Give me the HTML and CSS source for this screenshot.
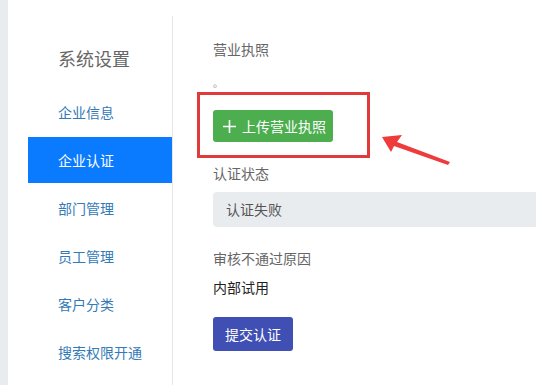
FILE: index.html
```html
<!DOCTYPE html>
<html lang="zh-CN">
<head>
    <meta charset="UTF-8">
    <meta name="viewport" content="width=device-width, initial-scale=1.0">
    <title>系统设置 - 企业认证</title>
    <link rel="stylesheet" href="styles.css">
</head>
<body>
    <div class="page">
        <div class="edge"></div>

        <!-- 左侧菜单 -->
        <div class="sidebar">
            <h2 class="side-title">系统设置</h2>
            <ul class="menu">
                <li class="menu-item">企业信息</li>
                <li class="menu-item active">企业认证</li>
                <li class="menu-item">部门管理</li>
                <li class="menu-item">员工管理</li>
                <li class="menu-item">客户分类</li>
                <li class="menu-item">搜索权限开通</li>
            </ul>
        </div>

        <!-- 认证表单 -->
        <div class="content">
            <div class="label first">营业执照</div>
            <div class="dot">。</div>

            <div class="mark-box">
                <button class="btn btn-green">
                    <svg class="plus" width="13" height="13" viewBox="0 0 13 13">
                        <path d="M6.5 0v13M0 6.5h13" stroke="#fff" stroke-width="1.6" fill="none"/>
                    </svg>
                    上传营业执照
                </button>
                <svg class="arrow" width="80" height="40" viewBox="0 0 80 40">
                    <path d="M0 5 L20 3 L15 10 L68 30 L66 33 L12 14 L9 20 Z" fill="#ee3b3b"/>
                </svg>
            </div>

            <div class="label">认证状态</div>
            <div class="field">认证失败</div>

            <div class="label reason">审核不通过原因</div>
            <div class="value">内部试用</div>

            <button class="btn btn-blue">提交认证</button>
        </div>
    </div>
</body>
</html>
```

FILE: styles.css
```css
body {
    margin: 0;
    font-family: "Noto Sans CJK SC", "Microsoft YaHei", sans-serif;
    background-color: #fff;
    color: #333;
    font-size: 14px;
}

.page {
    display: flex;
    height: 385px;
    overflow: hidden;
}

.edge {
    width: 8px;
    flex-shrink: 0;
    background-color: #e9ecef;
}

.sidebar {
    width: 164px;
    flex-shrink: 0;
    margin-top: 16px;
    border-right: 1px solid #e3e6ea;
}

.side-title {
    margin: 0;
    padding: 28px 0 0 50px;
    height: 45px;
    font-size: 18px;
    font-weight: normal;
    line-height: 28px;
    color: #666;
}

.menu {
    list-style: none;
    margin: 0 0 0 20px;
    padding: 0;
}

.menu-item {
    height: 46px;
    line-height: 46px;
    margin-bottom: 2px;
    padding-left: 30px;
    color: #337ab7;
}

.menu-item.active {
    background-color: #0a7bff;
    color: #fff;
}

.content {
    flex: 1;
    padding: 38px 0 0 40px;
    min-width: 0;
}

.label {
    line-height: 22px;
    color: #666;
    margin-top: 4px;
}

.label.first {
    margin-top: 0;
}

.dot {
    font-size: 10px;
    line-height: 18px;
    color: #888;
    margin-top: 14px;
}

.mark-box {
    position: relative;
    width: 120px;
    margin: 0 0 0 -16px;
    padding: 15px 34px 13px 13px;
    border: 3px solid #e03a3a;
}

.arrow {
    position: absolute;
    left: 182px;
    top: 37px;
}

.btn {
    display: flex;
    align-items: center;
    border: none;
    border-radius: 3px;
    color: #fff;
    font-family: inherit;
    font-size: 14px;
    cursor: pointer;
}

.btn-green {
    width: 120px;
    height: 32px;
    padding: 0 0 0 10px;
    gap: 6px;
    background-color: #4cae4f;
}

.field {
    height: 35px;
    line-height: 35px;
    margin-top: 8px;
    padding-left: 13px;
    background-color: #e9ecef;
    border-radius: 4px 0 0 4px;
    color: #555;
}

.label.reason {
    margin-top: 20px;
}

.value {
    line-height: 22px;
    margin-top: 7px;
    color: #222;
}

.btn-blue {
    margin-top: 19px;
    height: 34px;
    padding: 0 12px;
    background-color: #3f4fb4;
}
```
